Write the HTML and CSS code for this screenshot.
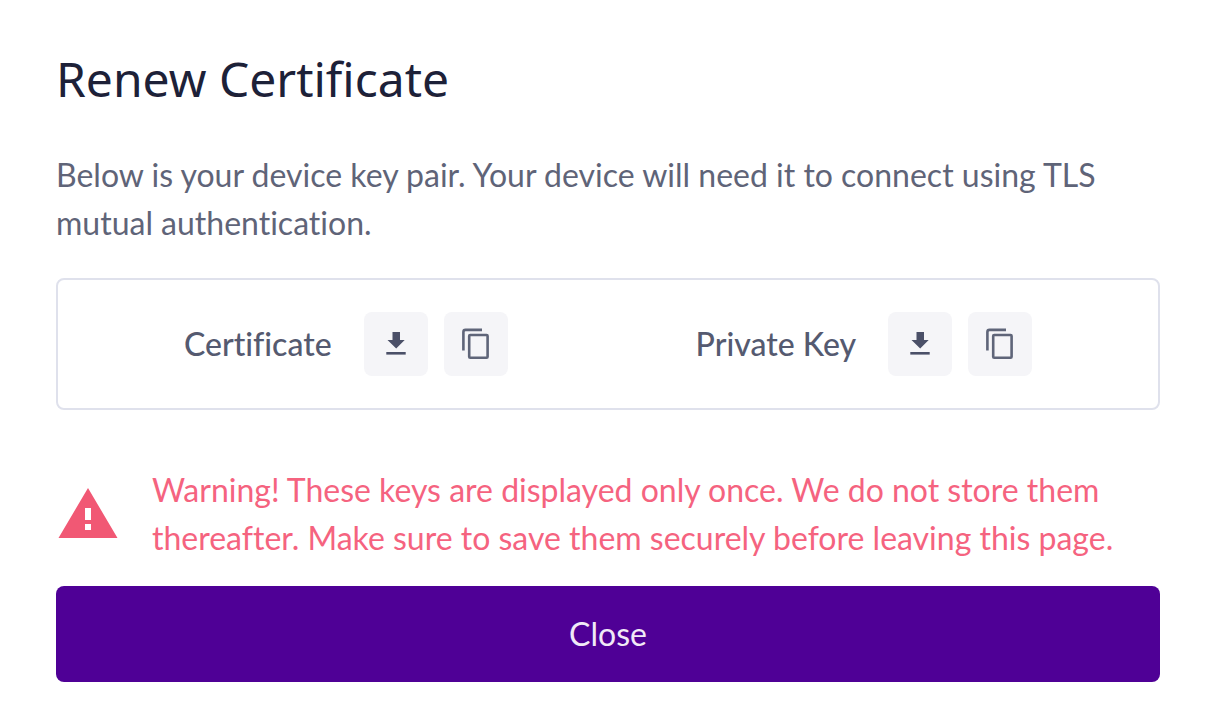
FILE: index.html
```html
<!DOCTYPE html>
<html lang="en">
<head>
<meta charset="utf-8">
<meta name="viewport" content="width=device-width, initial-scale=1">
<title>Renew Certificate</title>
<link rel="stylesheet" href="styles.css">
</head>
<body>
<svg class="sprite" aria-hidden="true">
  <symbol id="download" viewBox="0 0 32 32"><path d="M12.500 4h7.500v8h4.700L16.200 20.500 7.500 12h5z"/><path d="M6.300 24h19.400v2.600H6.300z"/></symbol>
  <symbol id="copy" viewBox="0 0 32 32"><path d="M3.400 22.500V4Q3.400 1.900 5.500 1.900H22" fill="none" stroke="currentColor" stroke-width="2.600"/><rect x="9.200" y="7" width="18.400" height="22.800" rx="1" fill="none" stroke="currentColor" stroke-width="2.600"/></symbol>
</svg>
<main class="dialog">
  <h1 class="title">Renew Certificate</h1>
  <p class="intro">Below is your device key pair. Your device will need it to connect using TLS mutual authentication.</p>
  <section class="keys">
    <div class="key">
      <span class="key-name">Certificate</span>
      <div class="actions">
        <button class="icon-button" type="button" aria-label="Download certificate"><svg class="icon"><use href="#download"/></svg></button>
        <button class="icon-button" type="button" aria-label="Copy certificate"><svg class="icon icon-copy"><use href="#copy"/></svg></button>
      </div>
    </div>
    <div class="key">
      <span class="key-name">Private Key</span>
      <div class="actions">
        <button class="icon-button" type="button" aria-label="Download private key"><svg class="icon"><use href="#download"/></svg></button>
        <button class="icon-button" type="button" aria-label="Copy private key"><svg class="icon icon-copy"><use href="#copy"/></svg></button>
      </div>
    </div>
  </section>
  <div class="warning">
    <svg class="warning-icon" viewBox="0 0 64 52" aria-hidden="true"><path fill-rule="evenodd" d="M32 0 61.500 50H2.500zM29 20v12h6V20zm0 16v6h6v-6z"/></svg>
    <p class="warning-text">Warning! These keys are displayed only once. We do not store them thereafter. Make sure to save them securely before leaving this page.</p>
  </div>
  <button class="close" type="button">Close</button>
</main>
</body>
</html>
```
FILE: styles.css
```css
* { box-sizing: border-box; }
body {
  margin: 0;
  background: #fff;
  color: #5f6478;
  font: 400 32px/48px Lato, sans-serif;
  font-variant-ligatures: none;
}
.sprite { display: none; }
.dialog { padding: 47px 52px 32px 56px; }
.title {
  margin: 0 0 40px;
  color: #1d2138;
  font-family: "Noto Sans", sans-serif;
  font-size: 48px;
  font-weight: 400;
  line-height: 64px;
}
.intro { margin: 0 0 31px; }
.keys {
  display: flex;
  justify-content: space-around;
  padding: 32px;
  border: 2px solid #dfe1ec;
  border-radius: 8px;
}
.key { display: flex; align-items: center; gap: 32px; }
.key-name { color: #555a70; font-weight: 500; }
.actions { display: flex; gap: 16px; }
.icon-button {
  display: flex;
  align-items: center;
  justify-content: center;
  width: 64px;
  height: 64px;
  padding: 0;
  border: 0;
  border-radius: 8px;
  background: #f5f5f8;
  color: #4b5068;
}
.icon { width: 32px; height: 32px; fill: currentColor; }
.icon-copy { color: #5f6579; }
.warning {
  display: flex;
  align-items: center;
  gap: 32px;
  margin: 56px 0 24px;
  color: #f5637f;
}
.warning-icon { flex: none; width: 64px; height: 52px; fill: #f15874; }
.warning-text { margin: 0; }
.close {
  display: block;
  width: 100%;
  height: 96px;
  border: 0;
  border-radius: 8px;
  background: #4f0096;
  color: #f1e9f7;
  font: inherit;
}
```
